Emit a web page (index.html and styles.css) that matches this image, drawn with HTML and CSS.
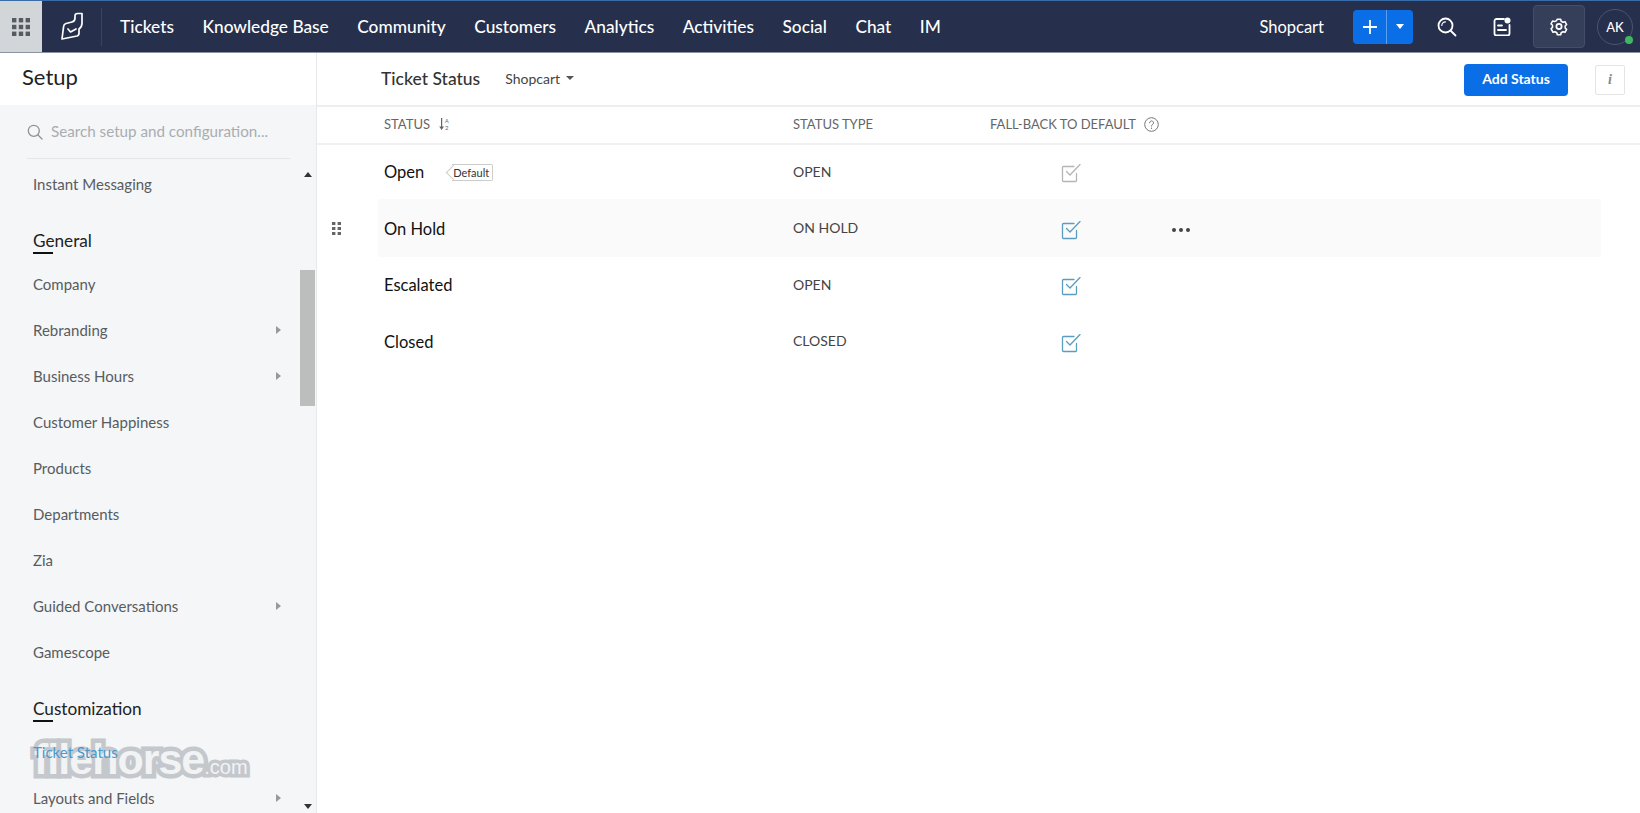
FILE: index.html
```html
<!DOCTYPE html>
<html lang="en">
<head>
    <meta charset="UTF-8">
    <title>Ticket Status</title>
    <link rel="stylesheet" href="styles.css">
</head>
<body>
    <div class="top-bar">
        <div class="apps-btn">
            <svg width="18" height="18" viewBox="0 0 18 18" fill="#555b63">
                <rect x="0" y="0" width="4.4" height="4.4"/><rect x="6.8" y="0" width="4.4" height="4.4"/><rect x="13.6" y="0" width="4.4" height="4.4"/>
                <rect x="0" y="6.8" width="4.4" height="4.4"/><rect x="6.8" y="6.8" width="4.4" height="4.4"/><rect x="13.6" y="6.8" width="4.4" height="4.4"/>
                <rect x="0" y="13.6" width="4.4" height="4.4"/><rect x="6.8" y="13.6" width="4.4" height="4.4"/><rect x="13.6" y="13.6" width="4.4" height="4.4"/>
            </svg>
        </div>
        <div class="logo">
            <svg width="23" height="29" viewBox="0 0 23 29" fill="none" stroke="#fff" stroke-width="1.700" stroke-linejoin="round" stroke-linecap="round">
                <path d="M21 1.500H16.500C14.800 1.500 14 2.500 14 4V6C14 8 13 9.500 11 10L5 11.500C3.500 12 2.800 13 2.600 14.500L1 27L16 24C17.500 23.600 18 22.500 18 21V17C20.500 15.500 21 13 21 11Z"/>
                <path d="M7 17l2.500 3 5.500-3"/>
            </svg>
        </div>
        <nav class="main-nav">
            <span>Tickets</span>
            <span>Knowledge Base</span>
            <span>Community</span>
            <span>Customers</span>
            <span>Analytics</span>
            <span>Activities</span>
            <span>Social</span>
            <span>Chat</span>
            <span>IM</span>
        </nav>
        <div class="top-right">
            <span class="portal-name">Shopcart</span>
            <div class="add-group">
                <div class="add-plus">
                    <svg width="14" height="14" viewBox="0 0 14 14" stroke="#fff" stroke-width="1.800"><path d="M7 0v14M0 7h14"/></svg>
                </div>
                <div class="add-caret"><i class="caret-down"></i></div>
            </div>
            <div class="top-icon">
                <svg width="20" height="20" viewBox="0 0 20 20" fill="none" stroke="#fff" stroke-width="1.800" stroke-linecap="round">
                    <circle cx="8.500" cy="8.500" r="7"/><path d="M13.500 13.500l5 5"/><path d="M4.800 8.500a3.700 3.700 0 0 1 3.700-3.700" stroke-width="1.200"/>
                </svg>
            </div>
            <div class="top-icon">
                <svg width="18" height="19" viewBox="0 0 18 19" fill="none" stroke="#fff" stroke-width="1.800" stroke-linecap="round">
                    <path d="M11 2H3.500A2 2 0 0 0 1.500 4v12.500a2 2 0 0 0 2 2h11a2 2 0 0 0 2-2V8"/>
                    <path d="M5 8.500h4M5 13h8"/>
                    <circle cx="14.500" cy="3.500" r="3" fill="#fff" stroke="none"/>
                </svg>
            </div>
            <div class="top-icon settings-btn">
                <svg width="18" height="19" viewBox="0 0 24 24" fill="none" stroke="#fff" stroke-width="2.300" stroke-linejoin="round">
                    <circle cx="12" cy="12" r="3.500"/>
                    <path d="M9.500 2h5l.7 3 2.700 1.500 3-.9 2.400 4.300-2.200 2.100v3l2.200 2.100-2.400 4.300-3-.9-2.700 1.500-.7 3h-5l-.7-3-2.700-1.500-3 .9L.2 16.100l2.200-2.100v-3L.2 8.900l2.400-4.300 3 .9 2.700-1.500z" transform="translate(1.200 .5) scale(.9)"/>
                </svg>
            </div>
            <div class="avatar">AK<i class="online-dot"></i></div>
        </div>
    </div>

    <div class="page">
        <aside class="sidebar">
            <div class="side-head">Setup</div>
            <div class="side-search">
                <svg width="16" height="16" viewBox="0 0 16 16" fill="none" stroke="#8e9398" stroke-width="1.300" stroke-linecap="round">
                    <circle cx="6.800" cy="6.800" r="5.500"/><path d="M11 11l4 4"/>
                </svg>
                <span>Search setup and configuration...</span>
            </div>
            <div class="side-scroll">
                <div class="side-list">
                    <div class="side-item">Instant Messaging</div>
                    <div class="side-group">General</div>
                    <div class="side-item">Company</div>
                    <div class="side-item">Rebranding<i class="caret-right"></i></div>
                    <div class="side-item">Business Hours<i class="caret-right"></i></div>
                    <div class="side-item">Customer Happiness</div>
                    <div class="side-item">Products</div>
                    <div class="side-item">Departments</div>
                    <div class="side-item">Zia</div>
                    <div class="side-item">Guided Conversations<i class="caret-right"></i></div>
                    <div class="side-item">Gamescope</div>
                    <div class="side-group">Customization</div>
                    <div class="side-item active">Ticket Status</div>
                    <div class="side-item">Layouts and Fields<i class="caret-right"></i></div>
                </div>
                <div class="scrollbar">
                    <i class="arrow-up"></i>
                    <div class="thumb"></div>
                    <i class="arrow-down"></i>
                </div>
            </div>
            <div class="watermark">filehorse<small>.com</small></div>
        </aside>

        <main class="content">
            <div class="content-head">
                <span class="content-title">Ticket Status</span>
                <span class="dept-select">Shopcart<i class="caret-small"></i></span>
                <button class="add-status">Add Status</button>
                <div class="info-btn">i</div>
            </div>

            <div class="status-row table-head">
                <div class="col-name">STATUS
                    <svg class="sort-icon" width="11" height="12" viewBox="0 0 11 12" fill="#666">
                        <path d="M2 0h1.200v8.500H5L2.600 12 .2 8.500H2z"/>
                        <text x="6" y="5" font-size="5.500" font-family="Lato">A</text>
                        <text x="6" y="11.500" font-size="6" font-family="Lato">2</text>
                    </svg>
                </div>
                <div class="col-type">STATUS TYPE</div>
                <div class="col-fallback">FALL-BACK TO DEFAULT
                    <svg width="15" height="15" viewBox="0 0 15 15" fill="none" stroke="#777" stroke-width="1">
                        <circle cx="7.500" cy="7.500" r="6.800"/>
                        <path d="M5.500 5.800a2 2 0 1 1 3 1.800c-.7.400-1 .8-1 1.500" stroke-linecap="round"/>
                        <circle cx="7.500" cy="11.200" r=".7" fill="#777" stroke="none"/>
                    </svg>
                </div>
            </div>

            <div class="status-row">
                <div class="col-name"><span class="status-name">Open</span><span class="default-tag">Default</span></div>
                <div class="col-type">OPEN</div>
                <div class="col-check">
                    <svg class="check-icon off" width="20" height="19" viewBox="0 0 20 19" fill="none" stroke-linecap="round"><path d="M13 2.500H2.500a1 1 0 0 0-1 1V16.500a1 1 0 0 0 1 1h12a1 1 0 0 0 1-1v-7"/><path d="M5.500 7.500l3.500 3.500 10-10.500"/></svg>
                </div>
            </div>
            <div class="status-row hover">
                <svg class="drag-icon" width="9" height="13" viewBox="0 0 9 13" fill="#666">
                    <rect width="3.400" height="3"/><rect x="5.600" width="3.400" height="3"/>
                    <rect y="5" width="3.400" height="3"/><rect x="5.600" y="5" width="3.400" height="3"/>
                    <rect y="10" width="3.400" height="3"/><rect x="5.600" y="10" width="3.400" height="3"/>
                </svg>
                <div class="col-name"><span class="status-name">On Hold</span></div>
                <div class="col-type">ON HOLD</div>
                <div class="col-check">
                    <svg class="check-icon" width="20" height="19" viewBox="0 0 20 19" fill="none" stroke-linecap="round"><path d="M13 2.500H2.500a1 1 0 0 0-1 1V16.500a1 1 0 0 0 1 1h12a1 1 0 0 0 1-1v-7"/><path d="M5.500 7.500l3.500 3.500 10-10.500"/></svg>
                </div>
                <div class="more-dots"><i></i><i></i><i></i></div>
            </div>
            <div class="status-row">
                <div class="col-name"><span class="status-name">Escalated</span></div>
                <div class="col-type">OPEN</div>
                <div class="col-check">
                    <svg class="check-icon" width="20" height="19" viewBox="0 0 20 19" fill="none" stroke-linecap="round"><path d="M13 2.500H2.500a1 1 0 0 0-1 1V16.500a1 1 0 0 0 1 1h12a1 1 0 0 0 1-1v-7"/><path d="M5.500 7.500l3.500 3.500 10-10.500"/></svg>
                </div>
            </div>
            <div class="status-row">
                <div class="col-name"><span class="status-name">Closed</span></div>
                <div class="col-type">CLOSED</div>
                <div class="col-check">
                    <svg class="check-icon" width="20" height="19" viewBox="0 0 20 19" fill="none" stroke-linecap="round"><path d="M13 2.500H2.500a1 1 0 0 0-1 1V16.500a1 1 0 0 0 1 1h12a1 1 0 0 0 1-1v-7"/><path d="M5.500 7.500l3.500 3.500 10-10.500"/></svg>
                </div>
            </div>
        </main>
    </div>
</body>
</html>
```

FILE: styles.css
```css
* {
    box-sizing: border-box;
}

body {
    margin: 0;
    height: 100vh;
    overflow: hidden;
    display: flex;
    flex-direction: column;
    background: #fff;
    color: #111;
    font-family: Lato, "Open Sans", sans-serif;
}

i {
    font-style: normal;
    display: block;
}

/* top bar */
.top-bar {
    height: 53px;
    flex: none;
    display: flex;
    align-items: center;
    background: #26304d;
    border-top: 1px solid #3a6ca8;
    border-bottom: 1px solid #8b92a0;
    color: #fff;
}

.apps-btn {
    width: 42px;
    height: 100%;
    display: flex;
    align-items: center;
    justify-content: center;
    background: #d3d6d8;
}

.logo {
    width: 60px;
    height: 38px;
    padding-left: 2px;
    display: flex;
    align-items: center;
    justify-content: center;
    border-right: 1px solid #3a4461;
}

.main-nav {
    display: flex;
    gap: 28.500px;
    padding-left: 18px;
    font-size: 17.300px;
    font-weight: 500;
}

.top-right {
    margin-left: auto;
    display: flex;
    align-items: center;
    height: 100%;
}

.portal-name {
    font-size: 16.500px;
    margin-right: 29px;
}

.add-group {
    display: flex;
    width: 60px;
    height: 34px;
    margin-right: 6px;
    border-radius: 4px;
    background: #0a6fe6;
}

.add-plus {
    width: 34px;
    display: flex;
    align-items: center;
    justify-content: center;
    border-right: 1px solid #5c9ff0;
}

.add-caret {
    flex: 1;
    display: flex;
    align-items: center;
    justify-content: center;
}

.caret-down {
    border: 4px solid transparent;
    border-top: 5px solid #fff;
    border-bottom: 0;
}

.top-icon {
    width: 55px;
    height: 100%;
    display: flex;
    align-items: center;
    justify-content: center;
}

.settings-btn {
    width: 52px;
    height: 43px;
    margin: 0 12px 0 4px;
    border: 1px solid #454e68;
    border-radius: 4px;
    background: #363f59;
}

.avatar {
    position: relative;
    width: 36px;
    height: 36px;
    margin-right: 7px;
    border: 1px solid #4b5570;
    border-radius: 50%;
    display: flex;
    align-items: center;
    justify-content: center;
    font-size: 13px;
    font-weight: 500;
}

.online-dot {
    position: absolute;
    right: -1px;
    bottom: 0;
    width: 8px;
    height: 8px;
    border-radius: 50%;
    background: #3fb65f;
}

/* sidebar */
.page {
    flex: 1;
    display: flex;
    min-height: 0;
}

.sidebar {
    position: relative;
    width: 317px;
    flex: none;
    display: flex;
    flex-direction: column;
    background: #f4f6f8;
    border-right: 1px solid #e6e8ea;
}

.side-head {
    height: 52px;
    flex: none;
    padding: 10px 0 0 22px;
    background: #fff;
    font-size: 22px;
    color: #222;
}

.side-search {
    height: 54px;
    flex: none;
    margin: 0 26px 0 27px;
    display: flex;
    align-items: center;
    gap: 8px;
    border-bottom: 1px solid #e3e5e7;
    font-size: 15.200px;
    color: #a9adb1;
}

.side-search span {
    padding-bottom: 2px;
}

.side-scroll {
    flex: 1;
    min-height: 0;
    display: flex;
    overflow: hidden;
}

.side-list {
    flex: 1;
    padding: 2px 19px 0 33px;
}

.side-item {
    height: 46px;
    display: flex;
    align-items: center;
    justify-content: space-between;
    font-size: 15px;
    color: #585c60;
}

.side-item.active {
    position: relative;
    z-index: 1;
    color: #4a98cd;
}

.side-group {
    position: relative;
    height: 42px;
    margin-top: 12px;
    display: flex;
    align-items: center;
    font-size: 17.200px;
    color: #222;
}

.side-group::after {
    content: "";
    position: absolute;
    left: 0;
    bottom: 7px;
    width: 20px;
    height: 2px;
    background: #111;
}

.caret-right {
    border: 4px solid transparent;
    border-left: 5px solid #999;
    border-right: 0;
}

.scrollbar {
    width: 15px;
    flex: none;
    margin-right: 1px;
    display: flex;
    flex-direction: column;
    align-items: center;
    padding-top: 13px;
}

.thumb {
    width: 100%;
    height: 136px;
    margin-top: 93px;
    background: #bcbebe;
}

.arrow-up {
    border: 4px solid transparent;
    border-bottom: 5px solid #333;
    border-top: 0;
}

.arrow-down {
    margin-top: auto;
    margin-bottom: 4px;
    border: 4px solid transparent;
    border-top: 5px solid #333;
    border-bottom: 0;
}

/* stock photo mark lying over the menu */
.watermark {
    position: absolute;
    left: 34px;
    bottom: 28px;
    line-height: 36px;
    white-space: nowrap;
    font-family: "Liberation Sans", sans-serif;
    font-size: 43px;
    font-weight: 700;
    letter-spacing: -1px;
    color: #f1f3f5;
    -webkit-text-stroke: 9px #c4c8cc;
    paint-order: stroke fill;
}

.watermark small {
    font-size: 20px;
    font-weight: 400;
    letter-spacing: 0;
    -webkit-text-stroke: 7px #c4c8cc;
}

/* content */
.content {
    flex: 1;
    min-width: 0;
}

.content-head {
    height: 54px;
    display: flex;
    align-items: center;
    padding: 0 15px 2px 64px;
    border-bottom: 2px solid #eceeef;
}

.content-title {
    font-size: 17.500px;
    font-weight: 500;
    color: #333;
}

.dept-select {
    margin-left: 25px;
    display: flex;
    align-items: center;
    gap: 6px;
    font-size: 14px;
    color: #444;
}

.caret-small {
    border: 4px solid transparent;
    border-top: 4px solid #555;
    border-bottom: 0;
}

.add-status {
    margin: 4px 0 0 auto;
    width: 104px;
    height: 32px;
    padding: 0 0 3px;
    border: 0;
    border-radius: 4px;
    background: #0a6fe6;
    color: #fff;
    font-family: inherit;
    font-size: 14px;
    font-weight: 700;
}

.info-btn {
    width: 30px;
    height: 30px;
    margin: 4px 0 0 27px;
    border: 1px solid #e4e4e4;
    border-radius: 2px;
    text-align: center;
    line-height: 27px;
    font-family: "Liberation Serif", serif;
    font-style: italic;
    font-weight: 700;
    font-size: 14px;
    color: #888;
}

.status-row {
    position: relative;
    height: 56.500px;
    margin: 0 40px 0 62px;
    padding-left: 5px;
    display: flex;
    align-items: center;
    font-size: 14px;
    color: #444;
}

.table-head {
    height: 38px;
    margin: 0 0 -2px;
    padding: 0 0 2px 67px;
    border-bottom: 2px solid #f0f1f2;
    font-size: 13px;
    color: #666;
}

.col-name {
    width: 409px;
    flex: none;
    display: flex;
    align-items: center;
    gap: 9px;
}

.col-type {
    width: 197px;
    flex: none;
}

.col-fallback {
    display: flex;
    align-items: center;
    gap: 8px;
}

.col-check {
    width: 72px;
    margin-left: 45px;
    display: flex;
    justify-content: center;
    margin-top: 5px;
}

.status-name {
    margin-top: 2px;
    font-size: 16.500px;
    color: #111;
}

.default-tag {
    position: relative;
    margin: 2px 0 0 19px;
    height: 17px;
    padding: 0 3px 0 1px;
    border: 1px solid #ccc;
    border-left: 0;
    border-radius: 0 2px 2px 0;
    line-height: 15px;
    font-size: 11px;
    color: #333;
}

.default-tag::before {
    content: "";
    position: absolute;
    left: -4px;
    top: 2px;
    width: 10px;
    height: 10px;
    border-left: 1px solid #ccc;
    border-bottom: 1px solid #ccc;
    transform: rotate(45deg);
}

.hover {
    background: #fafafa;
    box-shadow: 0 0 0 1px #fafafa;
}

.drag-icon {
    position: absolute;
    left: -47px;
    top: 22px;
}

.check-icon {
    stroke: #5b9dc0;
    stroke-width: 1.300;
}

.check-icon.off {
    stroke: #b5b5b5;
}

.more-dots {
    display: flex;
    gap: 3px;
    margin-left: 65px;
    margin-top: 4px;
}

.more-dots i {
    width: 4px;
    height: 4px;
    border-radius: 50%;
    background: #444;
}
```
